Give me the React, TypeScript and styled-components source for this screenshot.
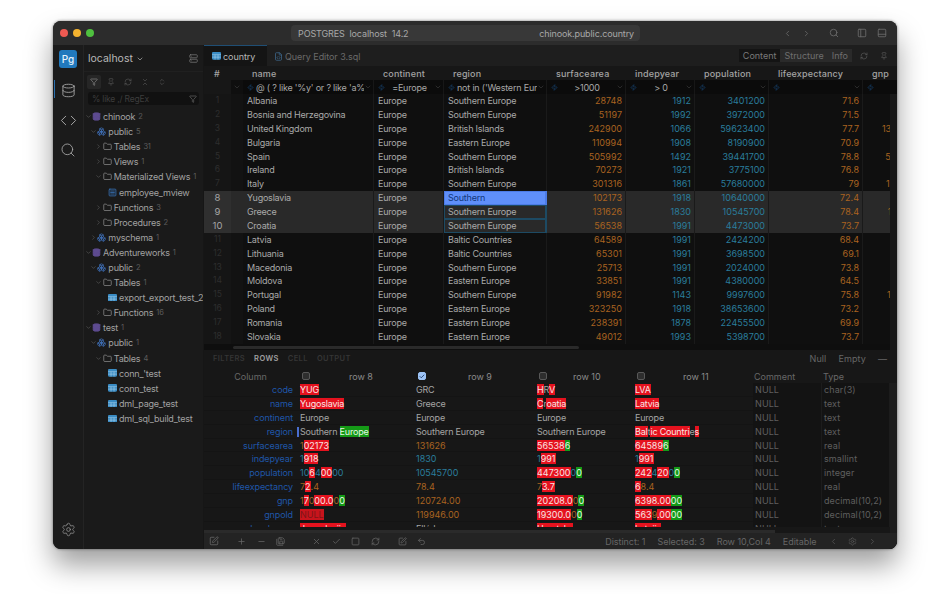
import React from "react";
import styled, { createGlobalStyle } from "styled-components";
import {
  ChevronDown, ChevronRight, ChevronLeft, Database, Search, Settings, Filter, Pin, RefreshCw, ChevronsDownUp,
  ChevronsUpDown, Folder, Zap, Code as CodeIcon, Boxes, Check, Plus, Minus, X, Square, Undo2,
  PanelLeft, PanelBottom, PanelRight, Server, FileCode, SquarePen, SaveAll, SquareMenu,
} from "lucide-react";

const Global = createGlobalStyle`
  html, body { margin: 0; padding: 0; width: 950px; height: 594px; overflow: hidden; background: #fff; }
  * { box-sizing: border-box; }
  body { font-family: Inter, "Liberation Sans", sans-serif; font-size: 9px; }
`;

const Page = styled.div`width: 950px; height: 594px; padding: 21px 53px 45px;`;
const Win = styled.div`
  width: 844px; height: 528px; border-radius: 8px; overflow: hidden; display: flex; flex-direction: column;
  background: #1a1a1a; box-shadow: 0 16px 28px rgba(0,0,0,.38), 0 0 3px rgba(0,0,0,.5); color: #b4b4b4;
`;
const TitleBar = styled.div`
  height: 24px; flex: none; background: #2c2c2c; display: flex; align-items: center; padding: 0 10px 0 7px;
`;
const Dot = styled.span<{ $c: string }>`width: 8px; height: 8px; border-radius: 50%; background: ${p => p.$c}; margin-right: 5px;`;
const TitlePill = styled.div`
  margin-left: 192px; width: 349px; height: 16px; border-radius: 4px; background: #383838; display: flex; align-items: center;
  justify-content: space-between; padding: 0 6px 0 7px; font-size: 9px; color: #a8a8a8; letter-spacing: -.12px;
`;
const TitleTools = styled.div`margin-left: auto; display: flex; align-items: center; color: #6e6e6e;`;
const ToolGap = styled.span<{ $w: number }>`width: ${p => p.$w}px;`;

const Body = styled.div`flex: 1; display: flex; min-height: 0;`;
const Rail = styled.div`
  width: 31px; flex: none; background: #1b1b1b; border-right: 1px solid #242424; display: flex; flex-direction: column;
  align-items: center; padding-top: 5px; color: #a8a8a8;
`;
const Logo = styled.div`
  width: 18px; height: 18px; border-radius: 3px; background: #2179bd; color: #e8f3fb; font-size: 10px; font-weight: 500;
  display: flex; align-items: center; justify-content: center; margin-bottom: 7px;
`;
const RailItem = styled.div<{ $active?: boolean }>`
  width: 100%; height: 30px; display: flex; align-items: center; justify-content: center; position: relative;
  ${p => p.$active ? "&::before { content: ''; position: absolute; left: 1px; top: 5px; bottom: 7px; width: 1px; background: #2a6fae; }" : ""}
`;
const RailBottom = styled.div`margin-top: auto; height: 27px; display: flex; align-items: flex-start; color: #8f8f8f;`;

const Side = styled.div`width: 120px; flex: none; background: #1a1a1a; border-right: 1px solid #161616; display: flex; flex-direction: column; letter-spacing: -.2px;`;
const SideHead = styled.div`height: 27px; flex: none; display: flex; align-items: center; padding: 1px 5px 0 4px; font-size: 10.5px; color: #b8b8b8; gap: 3px; border-bottom: 1px solid #202020; letter-spacing: 0;`;
const SideHeadIcon = styled.span`margin-left: auto; color: #777; display: flex;`;
const SideTools = styled.div`display: flex; align-items: center; padding: 1px 0 0 3px; gap: 2px; height: 18px; flex: none; color: #555;`;
const SideTool = styled.span<{ $on?: boolean }>`
  width: 14px; height: 14px; display: flex; align-items: center; justify-content: center; border-radius: 2px; margin-right: 1px;
  background: ${p => p.$on ? "#262626" : "transparent"}; color: ${p => p.$on ? "#888" : "#555"};
`;
const SearchBox = styled.div`
  margin: 2px 4px 4px; height: 13px; flex: none; border-radius: 3px; background: #111; color: #3d3d3d; font-size: 8.5px;
  display: flex; align-items: center; justify-content: space-between; padding: 0 2px 0 4px;
  svg { color: #666; }
`;
const Tree = styled.div`flex: 1; overflow: hidden;`;
const TreeRow = styled.div<{ $d: number }>`
  height: 15.1px; display: flex; align-items: center; padding-left: ${p => p.$d * 5.35}px; white-space: nowrap; color: #a2a2a2; font-size: 9px;
`;
const Chev = styled.span`width: 8px; flex: none; display: flex; justify-content: center; color: #5e5e5e;`;
const NodeIcon = styled.span<{ $c: string }>`width: 9px; flex: none; display: flex; justify-content: center; color: ${p => p.$c}; margin-right: 2px;`;
const Count = styled.span`color: #5c5c5c; font-size: 7.5px; margin-left: 3px;`;

const Main = styled.div`flex: 1; min-width: 0; display: flex; flex-direction: column; background: #1a1a1a;`;
const Tabs = styled.div`height: 21px; flex: none; display: flex; align-items: stretch; background: #1e1e1e;`;
const Tab = styled.div<{ $on?: boolean }>`
  display: flex; align-items: center; gap: 2px; padding-left: ${p => p.$on ? "8px" : "7px"}; font-size: 9px; letter-spacing: -.05px;
  ${p => p.$on ? "width: 63px;" : ""}
  background: ${p => p.$on ? "#141414" : "transparent"}; color: ${p => p.$on ? "#b8b8b8" : "#6a6a6a"};
  border-top: 1px solid ${p => p.$on ? "#1f4e74" : "transparent"};
`;
const TabIcon = styled.span<{ $c: string }>`color: ${p => p.$c}; display: flex;`;
const TabRight = styled.div`margin-left: auto; display: flex; align-items: center; padding-right: 9px; color: #5a5a5a;`;
const Segment = styled.span<{ $on?: boolean }>`
  height: 13px; padding: 0 4px; display: flex; align-items: center; font-size: 9px;
  background: ${p => p.$on ? "#141414" : "#2a2a2a"}; color: ${p => p.$on ? "#7a7a7a" : "#6f6f6f"};
`;
const TabTool = styled.span<{ $ml: number }>`margin-left: ${p => p.$ml}px; display: flex;`;

const Cols = "27px 12px 131px 70px 103px 79px 69px 74px 94px 73px";
const GridArea = styled.div`flex: 1; min-height: 0; background: #0e0e0e; position: relative; overflow: hidden;`;
const VBar = styled.div`position: absolute; right: 0; top: 28px; bottom: 0; width: 7px; background: #181818;`;
const HThumb = styled.div`position: absolute; left: 29px; bottom: 1px; width: 346px; height: 3px; border-radius: 2px; background: #2a2a2a;`;
const HeadRow = styled.div`
  display: grid; grid-template-columns: ${Cols}; height: 14px; background: #171717; align-items: center; color: #a4a4a4; font-weight: 500; letter-spacing: .15px;
`;
const HeadCell = styled.div<{ $num?: boolean }>`padding-left: ${p => p.$num ? "10px" : "9px"}; white-space: nowrap; overflow: hidden;`;
const FilterRow = styled.div`display: grid; grid-template-columns: ${Cols}; height: 14px; background: #0b0b0b; align-items: center; color: #a8a8a8; letter-spacing: -.2px;`;
const FilterBlank = styled.div`background: #171717; height: 100%;`;
const FilterChevCell = styled.div`display: flex; justify-content: center; color: #3b3b3b; background: #0f0f0f; height: 100%; align-items: center;`;
const FilterCell = styled.div`display: flex; align-items: center; height: 100%; padding: 0 1px 0 4px; min-width: 0; border-right: 1px solid #171717;`;
const Bolt = styled.span`color: #1c4a7a; display: flex; flex: none;`;
const FilterText = styled.span<{ $center?: boolean }>`
  flex: 1; min-width: 0; overflow: hidden; white-space: nowrap; padding-left: ${p => p.$center ? 0 : "2px"}; text-align: ${p => p.$center ? "center" : "left"};
`;
const FilterChev = styled.span`color: #3b3b3b; display: flex; flex: none;`;
const DataRow = styled.div<{ $sel?: boolean }>`
  display: grid; grid-template-columns: ${Cols}; height: 13.875px; background: ${p => p.$sel ? "#292929" : "#0f0f0f"};
  line-height: 13.875px; color: #a9a9a9; white-space: nowrap;
`;
const NumCell = styled.div<{ $sel?: boolean }>`
  text-align: center; background: ${p => p.$sel ? "#2f2f2f" : "#151515"}; color: ${p => p.$sel ? "#a6a6a6" : "#2e2e2e"}; font-size: ${p => p.$sel ? "9.5px" : "8.5px"};
`;
const MarkCell = styled.div<{ $sel?: boolean }>`background: ${p => p.$sel ? "#292929" : "#121212"};`;
const Cell = styled.div<{ $right?: boolean; $c?: string; $mode?: "edit" | "picked" }>`
  padding: 0 ${p => p.$right ? "3px" : "4px"}; overflow: hidden; text-align: ${p => p.$right ? "right" : "left"};
  letter-spacing: ${p => p.$right ? "0" : "-.22px"};
  color: ${p => p.$mode === "edit" ? "#10357a" : p.$c || "inherit"};
  border-right: 1px solid ${p => p.$mode ? "#1d4a63" : "#1a1a1a"};
  ${p => p.$mode === "edit" ? "background: #5f8ffa; box-shadow: inset 0 0 0 1px #4c7be6; border-right-color: #4c7be6;" : ""}
  ${p => p.$mode === "picked" ? "box-shadow: inset 0 0 0 1px #1d4a63;" : ""}
`;

const Panel = styled.div`height: 199px; flex: none; display: flex; flex-direction: column; background: #171717; position: relative;`;
const PanelTabs = styled.div`height: 17px; flex: none; display: flex; align-items: center; padding: 0 10px 0 9px; font-size: 7.5px; font-weight: 600; letter-spacing: .4px; gap: 9px; color: #353535;`;
const PanelTab = styled.span<{ $on?: boolean }>`color: ${p => p.$on ? "#a0a0a0" : "#353535"};`;
const PanelRight = styled.div`margin-left: auto; display: flex; gap: 12px; color: #666; font-size: 9px; font-weight: 400; letter-spacing: .1px;`;
const DCols = "93px 116px 121px 98px 121px 69px 68px";
const DHead = styled.div`display: grid; grid-template-columns: ${DCols}; height: 14px; margin-top: 2px; align-items: center; color: #686868; flex: none;`;
const DHeadLabel = styled.div<{ $right?: boolean }>`text-align: ${p => p.$right ? "center" : "left"}; padding-left: ${p => p.$right ? "0" : "1px"};`;
const DHeadRow = styled.div`display: flex; align-items: center; padding-left: 5px; color: #8a8a8a;`;
const DHeadText = styled.span<{ $pad: number }>`margin-left: ${p => p.$pad}px;`;
const Tick = styled.span<{ $on?: boolean }>`
  width: 8px; height: 8px; border-radius: 2px; display: flex; align-items: center; justify-content: center; color: #0d2a55;
  background: ${p => p.$on ? "#9cc3f5" : "#2e2e2e"}; border: 1px solid ${p => p.$on ? "#9cc3f5" : "#585858"};
`;
const DBody = styled.div`height: 144px; flex: none; overflow: hidden;`;
const DRow = styled.div`display: grid; grid-template-columns: ${DCols}; height: 13.875px; line-height: 13.875px; white-space: nowrap; border-bottom: 1px solid #141414;`;
const DLabel = styled.div`text-align: right; padding-right: 4px; color: #1f56a8; letter-spacing: -.1px;`;
const DVal = styled.div<{ $c?: string; $cursor?: boolean }>`
  padding-left: 3px; color: ${p => p.$c || "#a5a5a5"}; position: relative; overflow: hidden; letter-spacing: ${p => p.$c ? "0" : "-.2px"};
  ${p => p.$cursor ? "&::before { content: ''; position: absolute; left: 0; top: 2px; bottom: 2px; width: 1.5px; background: #4a6fd0; }" : ""}
`;
const Meta = styled.div`padding-left: 2px; color: #5f5f5f; background: #131313; border-right: 1px solid #1c1c1c; letter-spacing: .1px;`;
const Red = styled.span`background: #e5121e; color: #f8e4e4;`;
const Green = styled.span`background: #159a17; color: #e4f7e4;`;
const NullMark = styled.span`background: #c8141c; color: #7e1418;`;
const DScrollV = styled.div`position: absolute; right: 0; top: 33px; bottom: 16px; width: 7px; background: #1c1c1c;`;
const DScrollH = styled.div`position: absolute; left: 0; bottom: 16px; width: 571px; height: 3px; background: #2a2a2a;`;
const Status = styled.div`height: 16px; flex: none; margin-top: auto; background: #232323; display: flex; align-items: center; padding-left: 5px; color: #666; font-size: 9px;`;
const SIcons = styled.div<{ $ml: number }>`display: flex; align-items: center; gap: 10.5px; margin-left: ${p => p.$ml}px;`;
const STexts = styled.div`margin-left: auto; display: flex; align-items: center; gap: 12px; letter-spacing: -.05px;`;
const SEnd = styled.div`display: flex; align-items: center; gap: 10.5px; margin: 0 10px 0 12px; color: #555;`;

const ORANGE = "#a96320";
const TEAL = "#2a7d9c";

const rows: [string, string, string, string, string, string, string][] = [
  ["Albania","Southern Europe","28748","1912","3401200","71.6","3205.00"],
  ["Bosnia and Herzegovina","Southern Europe","51197","1992","3972000","71.5","2841.00"],
  ["United Kingdom","British Islands","242900","1066","59623400","77.7","1378330.00"],
  ["Bulgaria","Eastern Europe","110994","1908","8190900","70.9","12178.00"],
  ["Spain","Southern Europe","505992","1492","39441700","78.8","553233.00"],
  ["Ireland","British Islands","70273","1921","3775100","76.8","75921.00"],
  ["Italy","Southern Europe","301316","1861","57680000","79","1161755.00"],
  ["Yugoslavia","Southern","102173","1918","10640000","72.4","17000.00"],
  ["Greece","Southern Europe","131626","1830","10545700","78.4","120724.00"],
  ["Croatia","Southern Europe","56538","1991","4473000","73.7","20208.00"],
  ["Latvia","Baltic Countries","64589","1991","2424200","68.4","6398.00"],
  ["Lithuania","Baltic Countries","65301","1991","3698500","69.1","10692.00"],
  ["Macedonia","Southern Europe","25713","1991","2024000","73.8","1694.00"],
  ["Moldova","Eastern Europe","33851","1991","4380000","64.5","1579.00"],
  ["Portugal","Southern Europe","91982","1143","9997600","75.8","105954.00"],
  ["Poland","Eastern Europe","323250","1918","38653600","73.2","151697.00"],
  ["Romania","Eastern Europe","238391","1878","22455500","69.9","38158.00"],
  ["Slovakia","Eastern Europe","49012","1993","5398700","73.7","20594.00"],
];

const diffRows: { l: string; c?: string; v: string[]; t: string }[] = [
  { l: "code", v: ["[YUG]", "GRC", "[H]R[V]", "[LVA]"], t: "char(3)" },
  { l: "name", v: ["[Yugoslavia]", "Greece", "[C]r[oatia]", "[Latvia]"], t: "text" },
  { l: "continent", v: ["Europe", "Europe", "Europe", "Europe"], t: "text" },
  { l: "region", v: ["Southern <Europe>", "Southern Europe", "Southern Europe", "[Bal]t[ic Countri]e[s]"], t: "text" },
  { l: "surfacearea", c: ORANGE, v: ["1[02173]", "131626", "[56538]<6>", "[64589]<6>"], t: "real" },
  { l: "indepyear", c: TEAL, v: ["1[918]", "1830", "1[991]", "1[991]"], t: "smallint" },
  { l: "population", c: TEAL, v: ["10[6]4[00]00", "10545700", "[447300]0<0>", "[242]4[20]0<0>"], t: "integer" },
  { l: "lifeexpectancy", c: ORANGE, v: ["7[2].4", "78.4", "7[3.7]", "[6]8.4"], t: "real" },
  { l: "gnp", c: ORANGE, v: ["1[7]0[00.0]0<0>", "120724.00", "[20208.0]0<0>", "[6398.00]<00>"], t: "decimal(10,2)" },
  { l: "gnpold", c: ORANGE, v: ["{NULL}", "119946.00", "[19300.0]0<0>", "[563]9[.00]<00>"], t: "decimal(10,2)" },
  { l: "localname", v: ["[Jugoslavija]", "Elláda", "[Hrvatska]", "[Latvija]"], t: "text" },
];

const Diff = ({ s }: { s: string }) => (
  <>
    {s.split(/(\[[^\]]*\]|<[^>]*>|\{[^}]*\})/).filter(Boolean).map((part, i) => {
      const inner = part.slice(1, -1);
      if (part[0] === "[") return <Red key={i}>{inner}</Red>;
      if (part[0] === "<") return <Green key={i}>{inner}</Green>;
      if (part[0] === "{") return <NullMark key={i}>{inner}</NullMark>;
      return <span key={i}>{part}</span>;
    })}
  </>
);

const TableGlyph = ({ size = 9 }: { size?: number }) => (
  <svg width={size} height={size * 0.85} viewBox="0 0 10 8.5">
    <rect width="10" height="8.5" rx="1.2" fill="#3a8cc4" />
    <path d="M0 3h10M0 5.7h10M3.4 3v5.5M6.7 3v5.5" stroke="#bcdcf0" strokeWidth=".55" />
  </svg>
);

type Node = { d: number; open?: boolean; leaf?: boolean; kind: "db" | "schema" | "folder" | "table" | "view"; name: string; n?: number };
const tree: Node[] = [
  { d: 0, open: true, kind: "db", name: "chinook", n: 2 },
  { d: 1, open: true, kind: "schema", name: "public", n: 5 },
  { d: 2, kind: "folder", name: "Tables", n: 31 },
  { d: 2, kind: "folder", name: "Views", n: 1 },
  { d: 2, open: true, kind: "folder", name: "Materialized Views", n: 1 },
  { d: 3, leaf: true, kind: "view", name: "employee_mview" },
  { d: 2, kind: "folder", name: "Functions", n: 3 },
  { d: 2, kind: "folder", name: "Procedures", n: 2 },
  { d: 1, kind: "schema", name: "myschema", n: 1 },
  { d: 0, open: true, kind: "db", name: "Adventureworks", n: 1 },
  { d: 1, open: true, kind: "schema", name: "public", n: 2 },
  { d: 2, open: true, kind: "folder", name: "Tables", n: 1 },
  { d: 3, leaf: true, kind: "table", name: "export_export_test_2" },
  { d: 2, kind: "folder", name: "Functions", n: 16 },
  { d: 0, open: true, kind: "db", name: "test", n: 1 },
  { d: 1, open: true, kind: "schema", name: "public", n: 1 },
  { d: 2, open: true, kind: "folder", name: "Tables", n: 4 },
  { d: 3, leaf: true, kind: "table", name: "conn_'test" },
  { d: 3, leaf: true, kind: "table", name: "conn_test" },
  { d: 3, leaf: true, kind: "table", name: "dml_page_test" },
  { d: 3, leaf: true, kind: "table", name: "dml_sql_build_test" },
];

const nodeIcon = (k: Node["kind"]) => {
  switch (k) {
    case "db": return <NodeIcon $c="#5d4b8f"><Database size={9} fill="#5d4b8f" /></NodeIcon>;
    case "schema": return <NodeIcon $c="#3f6fb5"><Boxes size={9} /></NodeIcon>;
    case "folder": return <NodeIcon $c="#8a8a8a"><Folder size={9} /></NodeIcon>;
    case "view": return <NodeIcon $c="#3a7ac4"><SquareMenu size={9} /></NodeIcon>;
    default: return <NodeIcon $c="#3d8fc4"><TableGlyph /></NodeIcon>;
  }
};

const Filt = ({ text, center }: { text?: string; center?: boolean }) => (
  <FilterCell>
    <Bolt><Zap size={7} /></Bolt>
    <FilterText $center={center}>{text}</FilterText>
    <FilterChev><ChevronDown size={8} /></FilterChev>
  </FilterCell>
);

export default function App() {
  return (
    <Page>
      <Global />
      <Win>
        <TitleBar>
          <Dot $c="#ee5a52" /><Dot $c="#f4b32f" /><Dot $c="#4fc03f" />
          <TitlePill>
            <span>POSTGRES&nbsp;&nbsp;localhost&nbsp;&nbsp;14.2</span>
            <span>chinook.public.country</span>
          </TitlePill>
          <TitleTools>
            <ChevronLeft size={9} /><ToolGap $w={10} /><ChevronRight size={9} />
            <ToolGap $w={18} />
            <Search size={10} />
            <ToolGap $w={18} />
            <PanelLeft size={10} /><ToolGap $w={10} /><PanelBottom size={10} />
          </TitleTools>
        </TitleBar>
        <Body>
          <Rail>
            <Logo>Pg</Logo>
            <RailItem $active><Database size={15} strokeWidth={1.4} /></RailItem>
            <RailItem><CodeIcon size={17} strokeWidth={1.4} /></RailItem>
            <RailItem><Search size={16} strokeWidth={1.3} /></RailItem>
            <RailBottom><Settings size={15} strokeWidth={1.3} /></RailBottom>
          </Rail>
          <Side>
            <SideHead>
              localhost <ChevronDown size={8} />
              <SideHeadIcon><Server size={9} /></SideHeadIcon>
            </SideHead>
            <SideTools>
              <SideTool $on><Filter size={8} /></SideTool>
              <SideTool><Pin size={8} /></SideTool>
              <SideTool><RefreshCw size={8} /></SideTool>
              <SideTool><ChevronsDownUp size={8} /></SideTool>
              <SideTool><ChevronsUpDown size={8} /></SideTool>
            </SideTools>
            <SearchBox>% like ,/ RegEx<Filter size={8} /></SearchBox>
            <Tree>
              {tree.map((t, i) => (
                <TreeRow key={i} $d={t.d}>
                  <Chev>{t.leaf ? null : t.open ? <ChevronDown size={7} /> : <ChevronRight size={7} />}</Chev>
                  {nodeIcon(t.kind)}
                  {t.name}
                  {t.n != null && <Count>{t.n}</Count>}
                </TreeRow>
              ))}
            </Tree>
          </Side>
          <Main>
            <Tabs>
              <Tab $on><TabIcon $c="#3d8fc4"><TableGlyph /></TabIcon>country</Tab>
              <Tab><TabIcon $c="#3f6a8f"><FileCode size={9} /></TabIcon>Query Editor 3.sql</Tab>
              <TabRight>
                <Segment $on>Content</Segment><Segment>Structure</Segment><Segment>Info</Segment>
                <TabTool $ml={8}><RefreshCw size={8} /></TabTool>
                <TabTool $ml={12}><Pin size={8} /></TabTool>
              </TabRight>
            </Tabs>
            <GridArea>
              <HeadRow>
                <HeadCell $num>#</HeadCell><HeadCell />
                {["name","continent","region","surfacearea","indepyear","population","lifeexpectancy","gnp"].map(h => <HeadCell key={h}>{h}</HeadCell>)}
              </HeadRow>
              <FilterRow>
                <FilterBlank />
                <FilterChevCell><ChevronDown size={8} /></FilterChevCell>
                <Filt text="@ ( ? like '%y' or ? like 'a%'" />
                <Filt text="=Europe" center />
                <Filt text="not in ('Western Eur" />
                <Filt text=">1000" center />
                <Filt text="> 0" center />
                <Filt /><Filt /><Filt />
              </FilterRow>
              {rows.map((r, i) => {
                const n = i + 1;
                const sel = n >= 8 && n <= 10;
                return (
                  <DataRow key={n} $sel={sel}>
                    <NumCell $sel={sel}>{n}</NumCell>
                    <MarkCell $sel={sel} />
                    <Cell>{r[0]}</Cell>
                    <Cell>Europe</Cell>
                    <Cell $mode={n === 8 ? "edit" : sel ? "picked" : undefined}>{r[1]}</Cell>
                    <Cell $right $c={ORANGE}>{r[2]}</Cell>
                    <Cell $right $c={TEAL}>{r[3]}</Cell>
                    <Cell $right $c={TEAL}>{r[4]}</Cell>
                    <Cell $right $c={ORANGE}>{r[5]}</Cell>
                    <Cell $right $c={ORANGE}>{r[6]}</Cell>
                  </DataRow>
                );
              })}
              <VBar />
              <HThumb />
            </GridArea>
            <Panel>
              <PanelTabs>
                <PanelTab>FILTERS</PanelTab><PanelTab $on>ROWS</PanelTab><PanelTab>CELL</PanelTab><PanelTab>OUTPUT</PanelTab>
                <PanelRight><span>Null</span><span>Empty</span><span>—</span></PanelRight>
              </PanelTabs>
              <DHead>
                <DHeadLabel $right>Column</DHeadLabel>
                <DHeadRow><Tick /><DHeadText $pad={39}>row 8</DHeadText></DHeadRow>
                <DHeadRow><Tick $on><Check size={7} strokeWidth={3} /></Tick><DHeadText $pad={42}>row 9</DHeadText></DHeadRow>
                <DHeadRow><Tick /><DHeadText $pad={26}>row 10</DHeadText></DHeadRow>
                <DHeadRow><Tick /><DHeadText $pad={38}>row 11</DHeadText></DHeadRow>
                <DHeadLabel>Comment</DHeadLabel>
                <DHeadLabel>Type</DHeadLabel>
              </DHead>
              <DBody>
                {diffRows.map(d => (
                  <DRow key={d.l}>
                    <DLabel>{d.l}</DLabel>
                    {d.v.map((s, i) => (
                      <DVal key={i} $c={d.c} $cursor={d.l === "region" && i === 0}><Diff s={s} /></DVal>
                    ))}
                    <Meta>NULL</Meta>
                    <Meta>{d.t}</Meta>
                  </DRow>
                ))}
              </DBody>
              <DScrollV />
              <DScrollH />
              <Status>
                <SIcons $ml={0}><SquarePen size={10} /></SIcons>
                <SIcons $ml={18}><Plus size={9} /><Minus size={9} /><SaveAll size={9} /></SIcons>
                <SIcons $ml={27}><X size={9} /><Check size={9} /><Square size={9} /><RefreshCw size={9} /></SIcons>
                <SIcons $ml={18}><SquarePen size={9} /><Undo2 size={9} /></SIcons>
                <STexts><span>Distinct: 1</span><span>Selected: 3</span><span>Row 10,Col 4</span><span>Editable</span></STexts>
                <SEnd><ChevronLeft size={9} /><Settings size={9} /><ChevronRight size={9} /><PanelRight size={9} /></SEnd>
              </Status>
            </Panel>
          </Main>
        </Body>
      </Win>
    </Page>
  );
}
